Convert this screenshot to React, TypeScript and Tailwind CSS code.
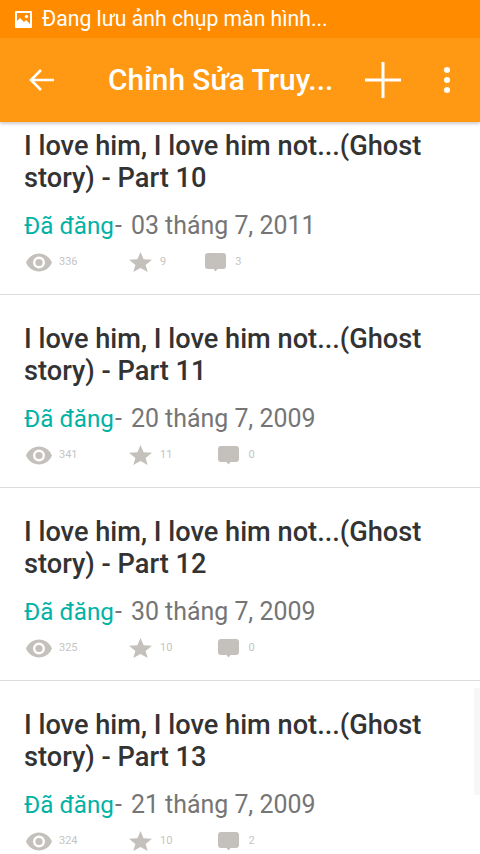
const parts = [
  { part: 10, date: '03 tháng 7, 2011', views: 336, stars: 9, comments: 3 },
  { part: 11, date: '20 tháng 7, 2009', views: 341, stars: 11, comments: 0 },
  { part: 12, date: '30 tháng 7, 2009', views: 325, stars: 10, comments: 0 },
  { part: 13, date: '21 tháng 7, 2009', views: 324, stars: 10, comments: 2 },
];

function EyeIcon() {
  return (
    <svg width="26" height="19" viewBox="0 0 26 18" className="shrink-0">
      <path
        fillRule="evenodd"
        fill="#c4c0bc"
        d="M13 0C7 0 2.400 3.700 0 9c2.400 5.300 7 9 13 9s10.600-3.700 13-9c-2.400-5.300-7-9-13-9Zm0 3a6 6 0 1 1 0 12a6 6 0 0 1 0-12Z"
      />
      <circle cx="13" cy="9" r="3.600" fill="#c4c0bc" />
    </svg>
  );
}

function StarIcon() {
  return (
    <svg width="23" height="20" viewBox="0 0 23 20" className="shrink-0">
      <path fill="#c4c0bc" d="M11.500 0l3.100 7.200 8.400.5-6.400 5.200 2.100 7.100-7.200-4-7.200 4 2.100-7.100L0 7.700l8.400-.5Z" />
    </svg>
  );
}

function CommentIcon() {
  return (
    <svg width="21" height="19" viewBox="0 0 21 19" className="shrink-0">
      <path
        fill="#c4c0bc"
        d="M3 0h15a3 3 0 0 1 3 3v10a3 3 0 0 1-3 3h-5.500L10.500 18.500 8.500 16H3a3 3 0 0 1-3-3V3a3 3 0 0 1 3-3Z"
      />
    </svg>
  );
}

export default function App() {
  return (
    <div className="relative h-[854px] w-[480px] overflow-hidden bg-white font-['Roboto',sans-serif]">
      <div className="relative z-10 shadow-[0_2px_3px_rgba(0,0,0,0.2)]">
        <div className="flex h-[38px] items-center bg-[#ff8c00] pl-[15px] text-white">
          <svg width="17" height="17" viewBox="0 0 17 17" className="shrink-0">
            <path
              fill="#fff"
              fillRule="evenodd"
              d="M1 0h15a1 1 0 0 1 1 1v15a1 1 0 0 1-1 1H1a1 1 0 0 1-1-1V1a1 1 0 0 1 1-1Zm1 2v8l3-3 4 4 2-2 4 4V2Z"
            />
            <circle cx="11.500" cy="5.500" r="1.700" fill="#fff" />
          </svg>
          <span className="ml-[10px] text-[21.2px] leading-none">Đang lưu ảnh chụp màn hình...</span>
        </div>
        <div className="flex h-[84px] items-center bg-[#ff9913] text-white">
          <svg width="26" height="24" viewBox="0 0 26 24" className="ml-[29px] shrink-0">
            <path d="M25 12H2M12 2 2 12l10 10" fill="none" stroke="#fff" strokeWidth="2.600" />
          </svg>
          <span className="ml-[53px] w-[240px] text-[29.8px] leading-none font-medium whitespace-nowrap">
            Chỉnh Sửa Truy...
          </span>
          <svg width="36" height="36" viewBox="0 0 36 36" className="ml-[17px] shrink-0">
            <path d="M18 0v36M0 18h36" stroke="#fff" strokeWidth="3" />
          </svg>
          <div className="ml-[43px] flex flex-col gap-[4px]">
            <span className="h-[6px] w-[6px] rounded-full bg-white" />
            <span className="h-[6px] w-[6px] rounded-full bg-white" />
            <span className="h-[6px] w-[6px] rounded-full bg-white" />
          </div>
        </div>
      </div>

      <div className="-mt-5">
        {parts.map((p) => (
          <div key={p.part} className="h-[193px] border-b border-[#dcdcdc] px-6 pt-[28px]">
            <h2 className="text-[27.2px] leading-[32px] font-medium text-[#333333]">
              {`I love him, I love him not...(Ghost story) - Part ${p.part}`}
            </h2>
            <p className="mt-[16px] flex text-[24.9px] leading-[32px] text-[#757575]">
              <span className="text-[24.2px] text-[#00b2a5]">Đã đăng</span>
              <span className="ml-[1px] w-[16px]">-</span>
              <span>{p.date}</span>
            </p>
            <div className="mt-[10px] ml-[2px] flex h-[20px] items-center text-[11px] text-[#c4c4c4]">
              <EyeIcon />
              <span className="ml-[7px] w-[70px]">{p.views}</span>
              <StarIcon />
              <span className="ml-[8px]">{p.stars}</span>
              <span className={p.stars > 9 ? 'ml-[46px] flex items-center' : 'ml-[39px] flex items-center'}>
                <CommentIcon />
              </span>
              <span className="ml-[9px]">{p.comments}</span>
            </div>
          </div>
        ))}
      </div>

      <div className="absolute top-[688px] right-0 h-[107px] w-[6px] bg-[#f7f7f7]" />
    </div>
  );
}
